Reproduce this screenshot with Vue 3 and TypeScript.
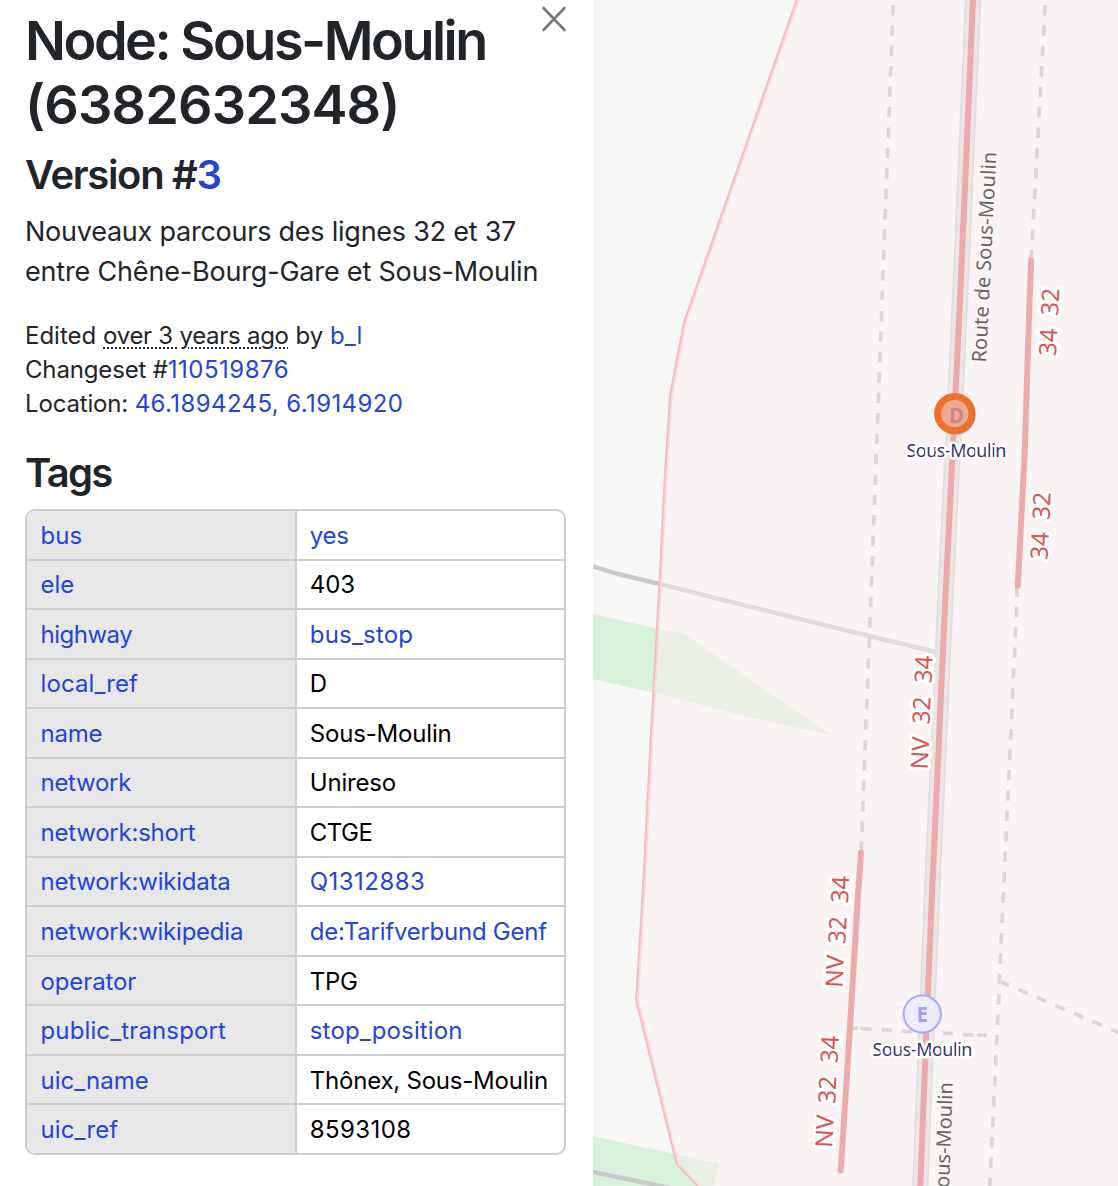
<script setup lang="ts">
interface Tag {
  key: string
  value: string
  link?: boolean
  /** letter tracking of the key and of the value, px */
  kt?: number
  vt?: number
}

interface RouteWord {
  text: string
  x: number
  y: number
}

const tags: Tag[] = [
  { key: 'bus', value: 'yes', link: true, vt: -0.3 },
  { key: 'ele', value: '403', vt: -0.1 },
  { key: 'highway', value: 'bus_stop', link: true, kt: -0.5, vt: 0.2 },
  { key: 'local_ref', value: 'D', kt: 0.1 },
  { key: 'name', value: 'Sous-Moulin', kt: -0.25, vt: -0.18 },
  { key: 'network', value: 'Unireso', kt: -0.28, vt: -0.2 },
  { key: 'network:short', value: 'CTGE', kt: -0.23, vt: -0.5 },
  { key: 'network:wikidata', value: 'Q1312883', link: true, kt: -0.22, vt: 0.45 },
  { key: 'network:wikipedia', value: 'de:Tarifverbund Genf', link: true, kt: -0.23, vt: -0.25 },
  { key: 'operator', value: 'TPG', kt: -0.12, vt: -0.3 },
  { key: 'public_transport', value: 'stop_position', link: true, kt: 0.13, vt: 0.15 },
  { key: 'uic_name', value: 'Thônex, Sous-Moulin', vt: -0.22 },
  { key: 'uic_ref', value: '8593108', kt: 0.12, vt: 0.4 },
]

// Line numbers printed beside the bus routes, one entry per word
const routeWords: RouteWord[] = [
  { text: '34', x: 1056, y: 356.3 },
  { text: '32', x: 1058, y: 316 },
  { text: '34', x: 1047.6, y: 560 },
  { text: '32', x: 1049.4, y: 520 },
  { text: 'NV', x: 927.8, y: 769.8 },
  { text: '32', x: 929.4, y: 724.4 },
  { text: '34', x: 931.4, y: 683.4 },
  { text: 'NV', x: 842.5, y: 988 },
  { text: '32', x: 845.3, y: 944.3 },
  { text: '34', x: 848.1, y: 903.6 },
  { text: 'NV', x: 832.2, y: 1148 },
  { text: '32', x: 835.2, y: 1104 },
  { text: '34', x: 837.6, y: 1063.5 },
]

const area = '797,0 684.5,322 670.5,395 665,480 659.5,590 651,740 643,895 636.5,1000 677,1164 698,1186'
const road = '973,0 967,140 960,300 954,425 945.3,600 938.5,750 932,895 928,990 920.3,1186'
</script>

<template>
  <div class="page">
    <aside class="sidebar">
      <header class="head">
        <h1><span class="name">Node: Sous-Moulin</span><br />(6382632348)</h1>
        <button class="close" aria-label="Close">
          <svg width="26" height="26" viewBox="0 0 26 26">
            <path d="M2.5 2 23.5 24M23.5 2 2.5 24" />
          </svg>
        </button>
      </header>
      <h2 class="version">Version #<a>3</a></h2>
      <p class="comment">
        Nouveaux parcours des lignes 32 et 37<br /><span class="second">entre Chêne-Bourg-Gare et Sous-Moulin</span>
      </p>
      <ul class="meta">
        <li>Edited <abbr>over 3 years ago</abbr> by <a>b_l</a></li>
        <li><span class="label">Changeset #</span><a class="digits">110519876</a></li>
        <li><span class="label">Location: </span><a class="coords">46.1894245, 6.1914920</a></li>
      </ul>
      <h2 class="tags-title">Tags</h2>
      <div class="tags">
        <div v-for="tag in tags" :key="tag.key" class="row">
          <div class="key" :style="{ letterSpacing: `${tag.kt ?? 0}px` }"><a>{{ tag.key }}</a></div>
          <div class="value" :style="{ letterSpacing: `${tag.vt ?? 0}px` }">
            <a v-if="tag.link">{{ tag.value }}</a>
            <template v-else>{{ tag.value }}</template>
          </div>
        </div>
      </div>
    </aside>

    <main class="map">
      <svg width="525" height="1186" viewBox="593 0 525 1186">
        <rect x="593" width="525" height="1186" fill="#f7f7f7" />
        <polygon points="593,614 655,628 683.5,633.5 832,735.3 744,716 655,693 593,679" fill="#d8f1d9" />
        <polygon points="593,1136 719,1164 714,1186 593,1186" fill="#d8f1d9" />
        <g fill="none" stroke="#c9c9c9" stroke-width="4.4">
          <polyline points="593,566.5 620,574.5 660,584 725,600.5 869,636 936,652" />
          <polyline points="590,1171.5 680,1190" />
        </g>
        <polygon :points="area + ' 1118,1186 1118,0'" fill="rgba(251,239,239,0.48)" />
        <polyline :points="area" class="edge-soft" transform="translate(0.7 0)" />
        <polyline :points="area" class="edge" transform="translate(-0.5 0)" />

        <g class="dash">
          <line x1="893.2" y1="5" x2="882" y2="300" stroke-dasharray="10.5 9.9" />
          <line x1="881.8" y1="311" x2="861" y2="856" stroke-dasharray="10.5 9.93" />
          <line x1="1045.2" y1="5" x2="1031" y2="262" stroke-dasharray="10.5 9.92" />
          <line x1="1017.2" y1="586" x2="1017" y2="597" />
          <line x1="1016.7" y1="606.7" x2="999.2" y2="983.5" stroke-dasharray="10.5 9.92" />
          <line x1="999" y1="994.2" x2="989.8" y2="1186" stroke-dasharray="10.5 9.92" />
          <line x1="1000" y1="981.5" x2="1009" y2="985.3" />
          <line x1="1018.2" y1="989.4" x2="1118" y2="1032.2" stroke-dasharray="10.2 10" />
          <path d="M853 1028.4h5M860.5 1028.7l11 .6M881.6 1029.7l10.4.5M901.7 1031l10.4.6M943 1033.2l10 .5M963 1034.6l10.6.3M977 1035h10" />
        </g>

        <polyline :points="road" class="casing" />
        <polyline :points="road" class="fill" />
        <g class="route">
          <polyline :points="road" />
          <polyline points="1031.2,260 1029.2,310 1024.8,450 1017.8,585.5" />
          <polyline points="861,852.5 858,895 849.8,1030 840.8,1170.5" />
        </g>
        <path d="M593 137.5h525M593 572.5h525M593 1007.5h525" stroke="#000" stroke-opacity=".015" />

        <text class="street" transform="translate(986 362.8) rotate(-87.2)" textLength="211">Route de Sous-Moulin</text>
        <text class="street" transform="translate(952.8 1082.4) rotate(-88)" text-anchor="end">Route de Sous-Moulin</text>

        <text
          v-for="(word, i) in routeWords"
          :key="i"
          class="line-no"
          :transform="`translate(${word.x} ${word.y}) rotate(-87.3)`"
        >{{ word.text }}</text>

        <circle cx="956" cy="415.3" r="18.5" class="stop" />
        <text x="956.5" y="423.2" class="stop-letter">D</text>
        <circle cx="954.8" cy="413.6" r="17.2" class="selected" />
        <circle cx="922.2" cy="1014" r="18.6" class="stop" />
        <text x="922.2" y="1021.6" class="stop-letter">E</text>

        <text x="906.4" y="457.2" textLength="100" class="stop-name">Sous-Moulin</text>
        <text x="872.4" y="1055.6" textLength="100" class="stop-name">Sous-Moulin</text>
      </svg>
    </main>
  </div>
</template>

<style>
body {
  background: #fff;
}
</style>

<style scoped>
.page {
  display: flex;
  width: 1118px;
  height: 1186px;
  overflow: hidden;
  background: #fff;
  font-family: Inter, 'Liberation Sans', sans-serif;
  color: #212529;
}
.sidebar {
  box-sizing: border-box;
  width: 593px;
  flex: none;
  padding: 0 27px 0 25px;
}
a {
  color: #2245d8;
}
.head {
  display: flex;
  justify-content: space-between;
  height: 144px;
}
h1 {
  margin: 8.5px 0 0;
  font-size: 54px;
  line-height: 64px;
  font-weight: 600;
  letter-spacing: -0.85px;
  white-space: nowrap;
}
.name {
  letter-spacing: -2.5px;
}
.close {
  width: 26px;
  height: 26px;
  margin: 6px -1px 0 0;
  padding: 0;
  border: 0;
  background: none;
}
.close svg {
  display: block;
  fill: none;
  stroke: #777;
  stroke-width: 2.6;
  stroke-linecap: round;
}
h2 {
  margin: 0;
  font-size: 40px;
  line-height: 48px;
  font-weight: 600;
  white-space: nowrap;
}
.version {
  margin-top: 7px;
  letter-spacing: -1.33px;
}
.comment {
  margin: 13px 0 0;
  font-size: 27px;
  line-height: 40px;
  letter-spacing: -0.24px;
  white-space: nowrap;
}
.second {
  letter-spacing: -0.18px;
}
.meta {
  margin: 27px 0 0;
  padding: 0;
  list-style: none;
  font-size: 24px;
  line-height: 34px;
  white-space: nowrap;
}
.label {
  letter-spacing: -0.16px;
}
.digits {
  letter-spacing: 0.5px;
}
.coords {
  letter-spacing: 0.4px;
}
abbr {
  letter-spacing: -0.27px;
  text-decoration: underline dotted 2px;
  text-underline-offset: 3px;
}
.tags-title {
  margin-top: 28px;
  letter-spacing: -1.7px;
}
.tags {
  display: flex;
  flex-direction: column;
  box-sizing: border-box;
  width: 541px;
  height: 646px;
  margin-top: 12px;
  border: 2px solid #cdcdcd;
  border-radius: 10px;
  overflow: hidden;
  font-size: 24px;
  color: #000;
}
.row {
  display: flex;
  flex: 1;
}
.row + .row {
  border-top: 2px solid #cdcdcd;
}
.key,
.value {
  display: flex;
  align-items: center;
  box-sizing: border-box;
  padding: 1px 0 0 13.5px;
  white-space: nowrap;
}
.value {
  padding-left: 12.8px;
}
.key {
  width: 270px;
  background: #e7e7e7;
  border-right: 2px solid #cdcdcd;
}
.map {
  flex: none;
  width: 525px;
}
.map svg {
  display: block;
  font-family: 'Noto Sans', 'Open Sans', sans-serif;
}
.edge,
.edge-soft {
  fill: none;
  stroke: #f6bcbc;
  stroke-width: 1.8;
}
.edge-soft {
  stroke: #fad8d8;
  stroke-width: 3;
}
.dash {
  fill: none;
  stroke: #ddd6d6;
  stroke-width: 3.7;
}
.casing {
  fill: none;
  stroke: #e2dddd;
  stroke-width: 16.4;
}
.fill {
  fill: none;
  stroke: #ebe6e6;
  stroke-width: 13.4;
}
.route {
  fill: none;
  stroke: #ebabab;
  stroke-width: 6;
  stroke-linecap: round;
  stroke-linejoin: round;
}
.street {
  font-size: 20px;
  fill: #666;
  stroke: #faf6f6;
  stroke-width: 3px;
  paint-order: stroke;
}
.line-no {
  font-size: 24px;
  fill: #dc5353;
  stroke: #fff;
  stroke-width: 6px;
  stroke-linejoin: round;
  paint-order: stroke;
}
.stop {
  fill: #ededff;
  stroke: #a8a8fa;
  stroke-width: 2;
}
.stop-letter {
  font-size: 20.5px;
  font-weight: 700;
  text-anchor: middle;
  fill: #9f9ff6;
}
.selected {
  fill: rgba(238, 110, 45, 0.52);
  stroke: #ee6e2d;
  stroke-width: 7;
}
.stop-name {
  font-size: 18px;
  fill: #33336f;
  stroke: #fff;
  stroke-width: 5px;
  stroke-linejoin: round;
  paint-order: stroke;
}
</style>
